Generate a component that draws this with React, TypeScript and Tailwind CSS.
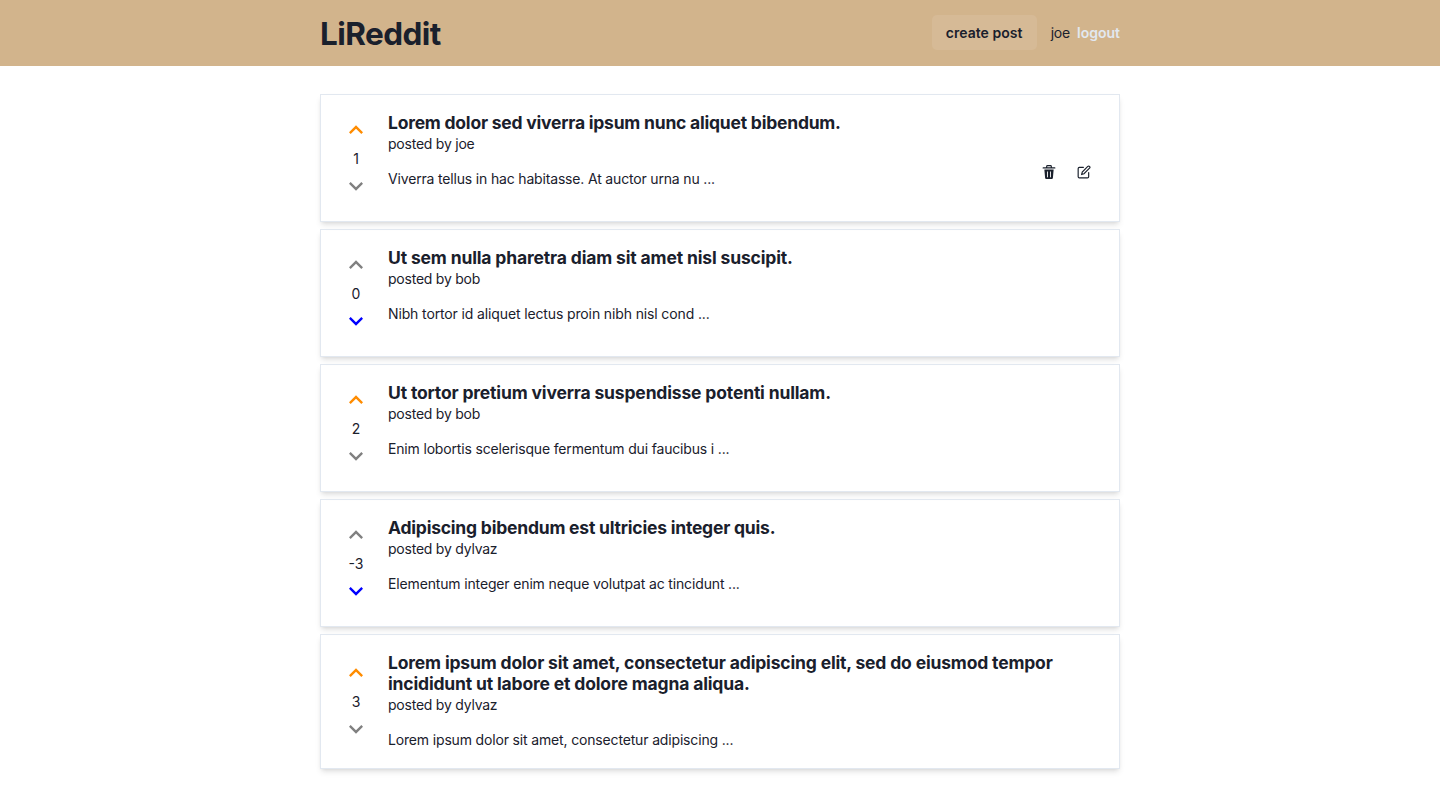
const posts = [
  { title: "Lorem dolor sed viverra ipsum nunc aliquet bibendum.", by: "joe", text: "Viverra tellus in hac habitasse. At auctor urna nu ...", points: 1, vote: 1, own: true, titleTracking: "tracking-[-0.22px]", textTracking: "tracking-[-0.17px]" },
  { title: "Ut sem nulla pharetra diam sit amet nisl suscipit.", by: "bob", text: "Nibh tortor id aliquet lectus proin nibh nisl cond ...", points: 0, vote: -1, own: false, titleTracking: "tracking-[-0.15px]", textTracking: "tracking-[-0.13px]" },
  { title: "Ut tortor pretium viverra suspendisse potenti nullam.", by: "bob", text: "Enim lobortis scelerisque fermentum dui faucibus i ...", points: 2, vote: 1, own: false, titleTracking: "tracking-[-0.16px]", textTracking: "tracking-[-0.17px]" },
  { title: "Adipiscing bibendum est ultricies integer quis.", by: "dylvaz", text: "Elementum integer enim neque volutpat ac tincidunt ...", points: -3, vote: -1, own: false, titleTracking: "tracking-[-0.21px]", textTracking: "tracking-[-0.15px]" },
  { title: "Lorem ipsum dolor sit amet, consectetur adipiscing elit, sed do eiusmod tempor incididunt ut labore et dolore magna aliqua.", by: "dylvaz", text: "Lorem ipsum dolor sit amet, consectetur adipiscing ...", points: 3, vote: 1, own: false, titleTracking: "tracking-[-0.16px]", textTracking: "tracking-[-0.16px]" },
];

function Chevron({ up, color }: { up: boolean; color: string }) {
  return (
    <button aria-label={up ? "upvote" : "downvote"} className={`flex size-7 items-center justify-center ${color}`}>
      <svg viewBox="0 0 24 24" className="size-7 shrink-0" fill="currentColor">
        <path d={up ? "M12 8l-6 6 1.41 1.41L12 10.83l4.59 4.58L18 14z" : "M16.59 8.59L12 13.17 7.41 8.59 6 10l6 6 6-6z"} />
      </svg>
    </button>
  );
}

function PostActions() {
  return (
    <div className="mt-px flex">
      <button aria-label="delete post" className="flex size-[35px] items-center justify-center">
        <svg viewBox="0 0 24 24" className="size-[14px]" fill="currentColor">
          <path d="M19.452 7.5H4.547a.5.5 0 0 0-.5.545l1.287 14.136A2 2 0 0 0 7.326 24h9.347a2 2 0 0 0 1.992-1.819L19.95 8.045a.5.5 0 0 0-.129-.382.5.5 0 0 0-.369-.163zm-9.2 13a.75.75 0 0 1-1.5 0v-9a.75.75 0 0 1 1.5 0zm5 0a.75.75 0 0 1-1.5 0v-9a.75.75 0 0 1 1.5 0z" />
          <path d="M22 4h-4.75a.25.25 0 0 1-.25-.25V2.5A2.5 2.5 0 0 0 14.5 0h-5A2.5 2.5 0 0 0 7 2.5v1.25a.25.25 0 0 1-.25.25H2a1 1 0 0 0 0 2h20a1 1 0 0 0 0-2zM9 3.75V2.5a.5.5 0 0 1 .5-.5h5a.5.5 0 0 1 .5.5v1.25a.25.25 0 0 1-.25.25h-5.5A.25.25 0 0 1 9 3.75z" />
        </svg>
      </button>
      <button aria-label="edit post" className="flex size-[35px] items-center justify-center">
        <svg viewBox="0 0 24 24" className="size-[14px]" fill="none" stroke="currentColor" strokeWidth="2" strokeLinecap="round">
          <path d="M11 4H4a2 2 0 0 0-2 2v14a2 2 0 0 0 2 2h14a2 2 0 0 0 2-2v-7" />
          <path d="M18.5 2.5a2.121 2.121 0 0 1 3 3L12 15l-4 1 1-4 9.5-9.5z" />
        </svg>
      </button>
    </div>
  );
}

export default function App() {
  return (
    <div className="min-h-[790px] bg-white font-['Inter',sans-serif] text-[14px] leading-[21px] text-[#1a202c]">
      <header className="h-[66px] bg-[#d2b48c]">
        <div className="mx-auto flex h-full w-[800px] items-center pb-px">
          <h1 className="pt-[3px] text-[31.5px] leading-[42px] font-bold tracking-[-0.55px]">LiReddit</h1>
          <div className="ml-auto flex items-center">
            <button className="mr-[14px] h-[35px] w-[105px] rounded-[5px] bg-[#d6ba96] font-semibold tracking-[0.04px]">create post</button>
            <span className="mr-[7px] tracking-[-0.2px]">joe</span>
            <button className="font-semibold text-[#e2e8f0]">logout</button>
          </div>
        </div>
      </header>
      <main className="mx-auto mt-7 flex w-[800px] flex-col gap-[7px]">
        {posts.map((p) => (
          <article key={p.title} className="flex min-h-[128px] border border-[#e2e8f0] pt-[16.5px] pr-[17.5px] pb-[18.5px] pl-[21px] shadow-md">
            <div className="mr-[18px] flex w-7 shrink-0 flex-col items-center justify-center pt-px">
              <Chevron up color={p.vote > 0 ? "text-[#ff8c00]" : "text-[#808080]"} />
              <span className="pt-[4px] pb-[3px]">{p.points}</span>
              <Chevron up={false} color={p.vote < 0 ? "text-[#0000ff]" : "text-[#808080]"} />
            </div>
            <div className="flex-1">
              <h2 className={`text-[17.5px] leading-[21px] font-bold ${p.titleTracking}`}>{p.title}</h2>
              <p className="tracking-[-0.23px]">posted by {p.by}</p>
              <div className="flex">
                <p className={`mt-[14px] flex-1 ${p.textTracking}`}>{p.text}</p>
                {p.own && <PostActions />}
              </div>
            </div>
          </article>
        ))}
      </main>
    </div>
  );
}
